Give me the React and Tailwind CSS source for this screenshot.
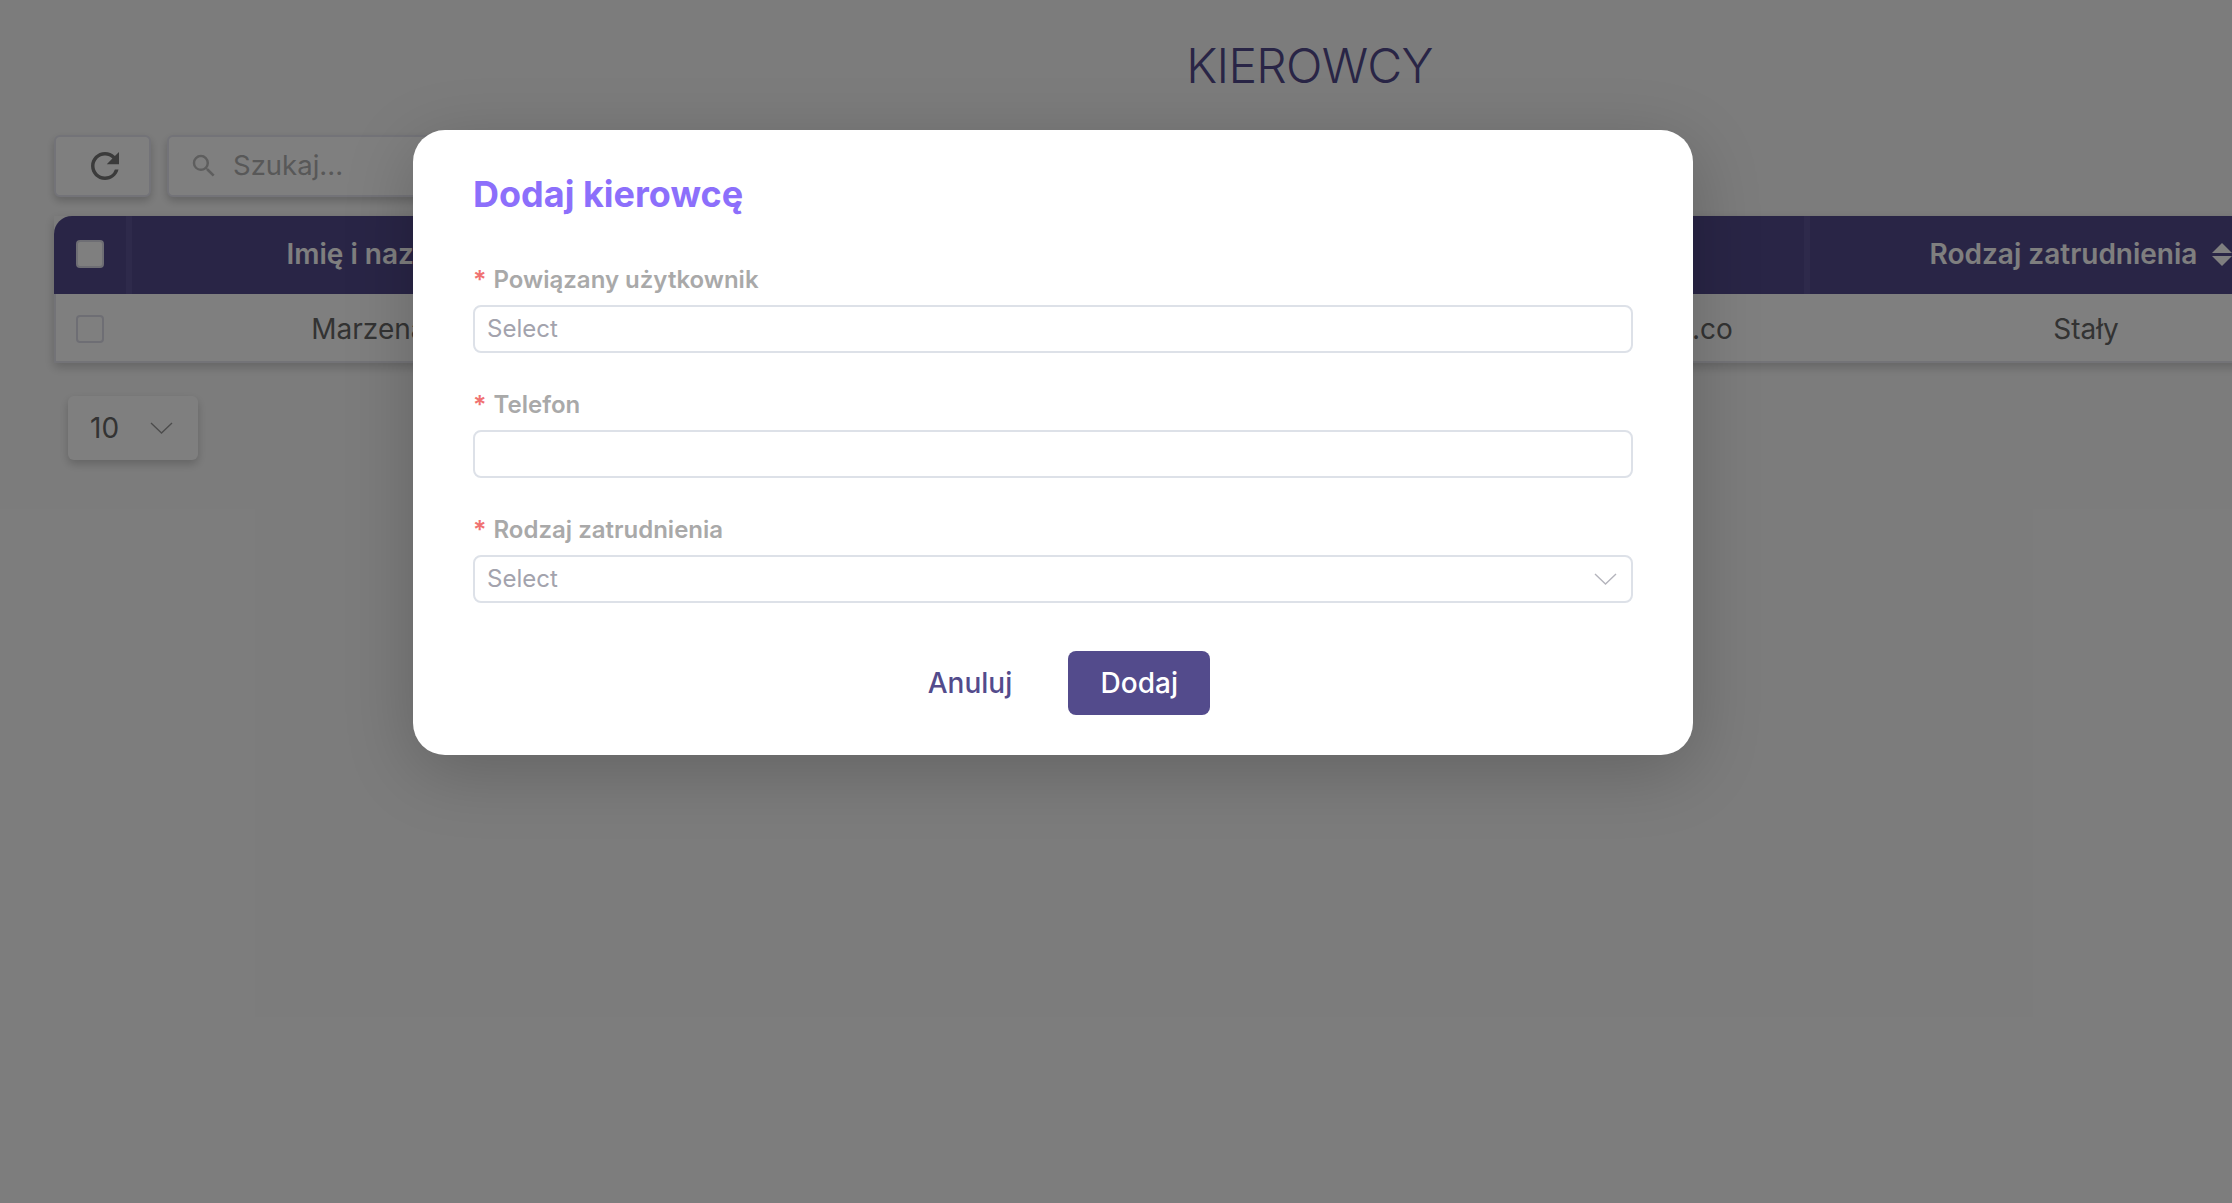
import React from 'react';
import { MdRefresh, MdSearch } from 'react-icons/md';

const Check = () => (
  <span className="block h-[28px] w-[28px] rounded-[4px] border-2 border-[#dcdce8] bg-white" />
);

const Chevron = ({ className }) => (
  <svg viewBox="0 0 23 12" fill="none" stroke="currentColor" strokeWidth="1.4" className={`h-[12px] w-[23px] shrink-0 ${className}`}>
    <path d="M1 1l10.5 10L22 1" />
  </svg>
);

const SortIcon = () => (
  <svg viewBox="0 0 20 23" className="h-[23px] w-[20px] shrink-0 fill-white">
    <path d="M10 0 20 10H0z" />
    <path d="M10 23 0 13h20z" />
  </svg>
);

const HeadCell = ({ label, className = 'pr-[18px]' }) => (
  <div className={`flex items-center justify-center gap-[15px] border-l-[6px] border-[#5c5496] pb-[2px] ${className}`}>
    <span className="whitespace-nowrap">{label}</span>
    <SortIcon />
  </div>
);

const columns = 'grid grid-cols-[72px_581px_625px_472px_566px_195px]';

const Field = ({ label, children }) => (
  <div className="flex flex-col">
    <label className="mb-[5px] flex h-[40px] items-center gap-[7px] text-[24px] font-semibold text-[#a9a9a9]">
      <span className="pt-[2px] text-[25px] text-[#f07272]">*</span>
      {label}
    </label>
    {children}
  </div>
);

const Input = ({ placeholder, chevron }) => (
  <div className="flex h-[48px] items-center justify-between rounded-[8px] border-2 border-[#dde1e8] bg-white pl-[12px] pr-[14px] text-[24px] text-[#a3a3ad]">
    <span>{placeholder}</span>
    {chevron && <Chevron className="text-[#b4b4bc]" />}
  </div>
);

const App = () => {
  return (
    <div className="relative h-[1203px] w-[2232px] overflow-hidden bg-[#f9f9f9] font-['Inter',sans-serif]">
      {/* Page behind the dialog */}
      <div className="w-[2619px] px-[54px] pt-[36px]">
        <h1 className="text-center text-[48px] font-light leading-[60px] tracking-[-0.75px] text-[#534b8c]">KIEROWCY</h1>

        <div className="mt-[39px] flex gap-[16px]">
          <button className="flex h-[62px] w-[97px] items-center justify-center rounded-[6px] border-2 border-[#e6e6f0] bg-white pl-[4px] text-[#777] shadow-[0_4px_8px_rgba(0,0,0,0.2)]">
            <MdRefresh className="text-[42px]" />
          </button>
          <div className="flex h-[62px] w-[500px] items-center gap-[14px] rounded-[6px] border-2 border-[#e6e6f0] bg-white pl-[20px] text-[27.5px] text-[#b0b0b0] shadow-[0_4px_8px_rgba(0,0,0,0.2)]">
            <MdSearch className="text-[30px] text-[#bcbcbc]" />
            Szukaj...
          </div>
        </div>

        <div className="mt-[19px] text-[28px] shadow-[0_4px_10px_rgba(0,0,0,0.2)]">
          <div className={`${columns} h-[78px] rounded-tl-[18px] bg-[#534b8c] font-semibold text-white`}>
            <div className="flex items-center pl-[22px] pb-[2px]">
              <Check />
            </div>
            <HeadCell label="Imię i nazwisko" className="pr-[25px]" />
            <HeadCell label="Telefon" />
            <HeadCell label="Email" />
            <HeadCell label="Rodzaj zatrudnienia" />
            <div className="border-l-[6px] border-[#5c5496]" />
          </div>
          <div className={`${columns} h-[69px] items-center border-b-2 border-l-2 border-[#e6e6ee] bg-white pt-[2px] text-[#666]`}>
            <div className="pl-[20px]">
              <Check />
            </div>
            <div className="text-center">Marzena Nowak</div>
            <div className="text-center">500 100 200</div>
            <div className="pr-[20px] text-center">marzena.nowak@firma.co</div>
            <div className="pr-[6px] text-center">Stały</div>
            <div />
          </div>
        </div>

        <div className="ml-[14px] mt-[33px] flex h-[64px] w-[130px] items-center gap-[31px] rounded-[6px] bg-white pl-[22px] text-[28px] text-[#666] shadow-[0_4px_10px_rgba(0,0,0,0.2)]">
          10
          <Chevron className="text-[#999]" />
        </div>
      </div>

      {/* Overlay + dialog */}
      <div className="absolute inset-0 bg-black/50" />
      <div className="absolute left-[413px] top-[130px] h-[625px] w-[1280px] rounded-[32px] bg-white px-[60px] pt-[37px] shadow-[0_16px_70px_rgba(0,0,0,0.2)]">
        <h2 className="text-[36px] font-bold leading-[54px] text-[#8c6ffb]">Dodaj kierowcę</h2>
        <div className="mt-[39px] flex flex-col gap-[32px]">
          <Field label="Powiązany użytkownik">
            <Input placeholder="Select" />
          </Field>
          <Field label="Telefon">
            <Input />
          </Field>
          <Field label="Rodzaj zatrudnienia">
            <Input placeholder="Select" chevron />
          </Field>
        </div>
        <div className="mt-[48px] flex items-center justify-center gap-[56px] pl-[32px] text-[28px] font-medium">
          <button className="text-[#534b8c]">Anuluj</button>
          <button className="h-[64px] w-[142px] rounded-[8px] bg-[#534b8c] text-white">Dodaj</button>
        </div>
      </div>
    </div>
  );
};

export default App;
